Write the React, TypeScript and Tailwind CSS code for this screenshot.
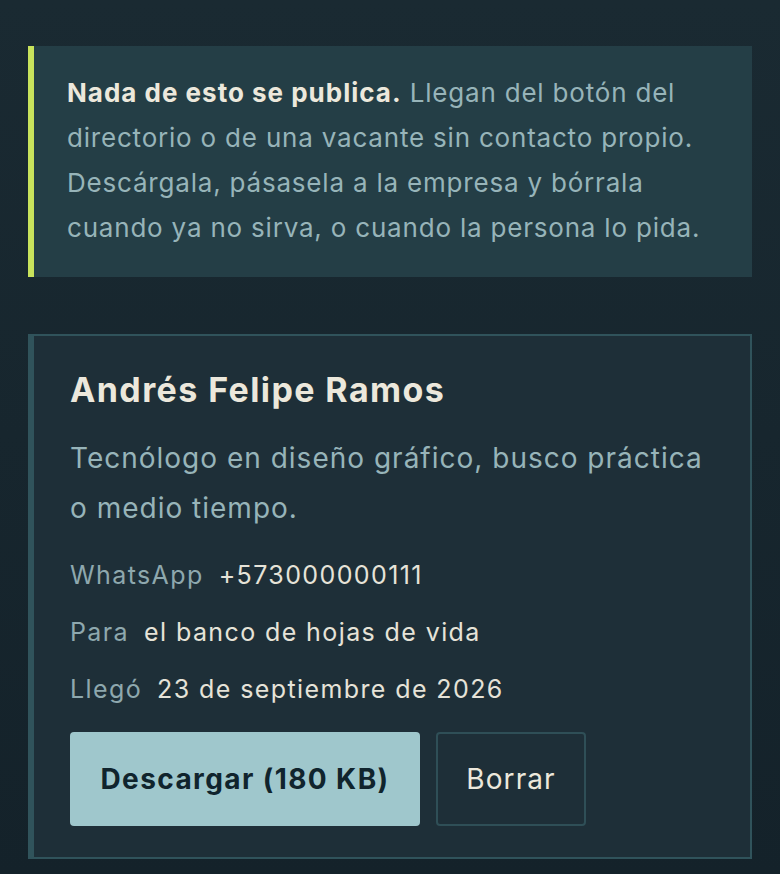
export default function App() {
  const rows = [
    { label: "WhatsApp", value: "+573000000111" },
    { label: "Para", value: "el banco de hojas de vida" },
    { label: "Llegó", value: "23 de septiembre de 2026" },
  ];

  return (
    <main
      className="min-h-[874px] bg-gradient-to-b from-[#1a2a32] to-[#14222a] px-[28px] pt-[46px] pb-[15px]"
      style={{ fontFamily: "Inter, \"Noto Sans\", sans-serif" }}
    >
      {/* notice */}
      <div className="border-l-[6px] border-[#c8e35c] bg-[#243e46] pl-[33px] pr-[30px] pt-6 pb-[27px]">
        <p className="text-[26px] leading-[45px] tracking-[0.8px] text-[#97b4b9]">
          <strong className="font-bold tracking-[1px] text-[#ece8dc]">Nada de esto se publica.</strong> Llegan del
          botón del directorio o de una vacante sin contacto propio. Descárgala, pásasela a la empresa y bórrala
          cuando ya no sirva, o cuando la persona lo pida.
        </p>
      </div>

      {/* request card */}
      <div className="mt-[57px] border-2 border-l-[6px] border-[#30535b] bg-[#1e2f38] pl-[36px] pr-[30px] pt-[34px] pb-[31px]">
        <h2 className="text-[34px] font-bold leading-[40px] tracking-[1.4px] text-[#ece8dc]">Andrés Felipe Ramos</h2>
        <p className="mt-[23px] text-[28px] leading-[50px] tracking-[1px] text-[#97b4b9]">
          Tecnólogo en diseño gráfico, busco práctica o medio tiempo.
        </p>
        <div className="mt-[22px] flex flex-col gap-[17px]">
          {rows.map((r) => (
            <div key={r.label} className="flex items-center gap-[15px] text-[25px] leading-[40px] tracking-[1.4px]">
              <span className="text-[#8ea8ae]">{r.label}</span>
              <span className="text-[#e6e3d8]">{r.value}</span>
            </div>
          ))}
        </div>
        <div className="mt-[23px] flex gap-4">
          <button className="h-[94px] w-[350px] rounded-[4px] bg-[#9fc7cc] text-[28px] font-bold tracking-[1.4px] text-[#10242d]">
            Descargar (180 KB)
          </button>
          <button className="h-[94px] w-[150px] rounded-[4px] border-2 border-[#2f4f57] text-[28px] tracking-[1.1px] text-[#ece8dc]">
            Borrar
          </button>
        </div>
      </div>
    </main>
  );
}
